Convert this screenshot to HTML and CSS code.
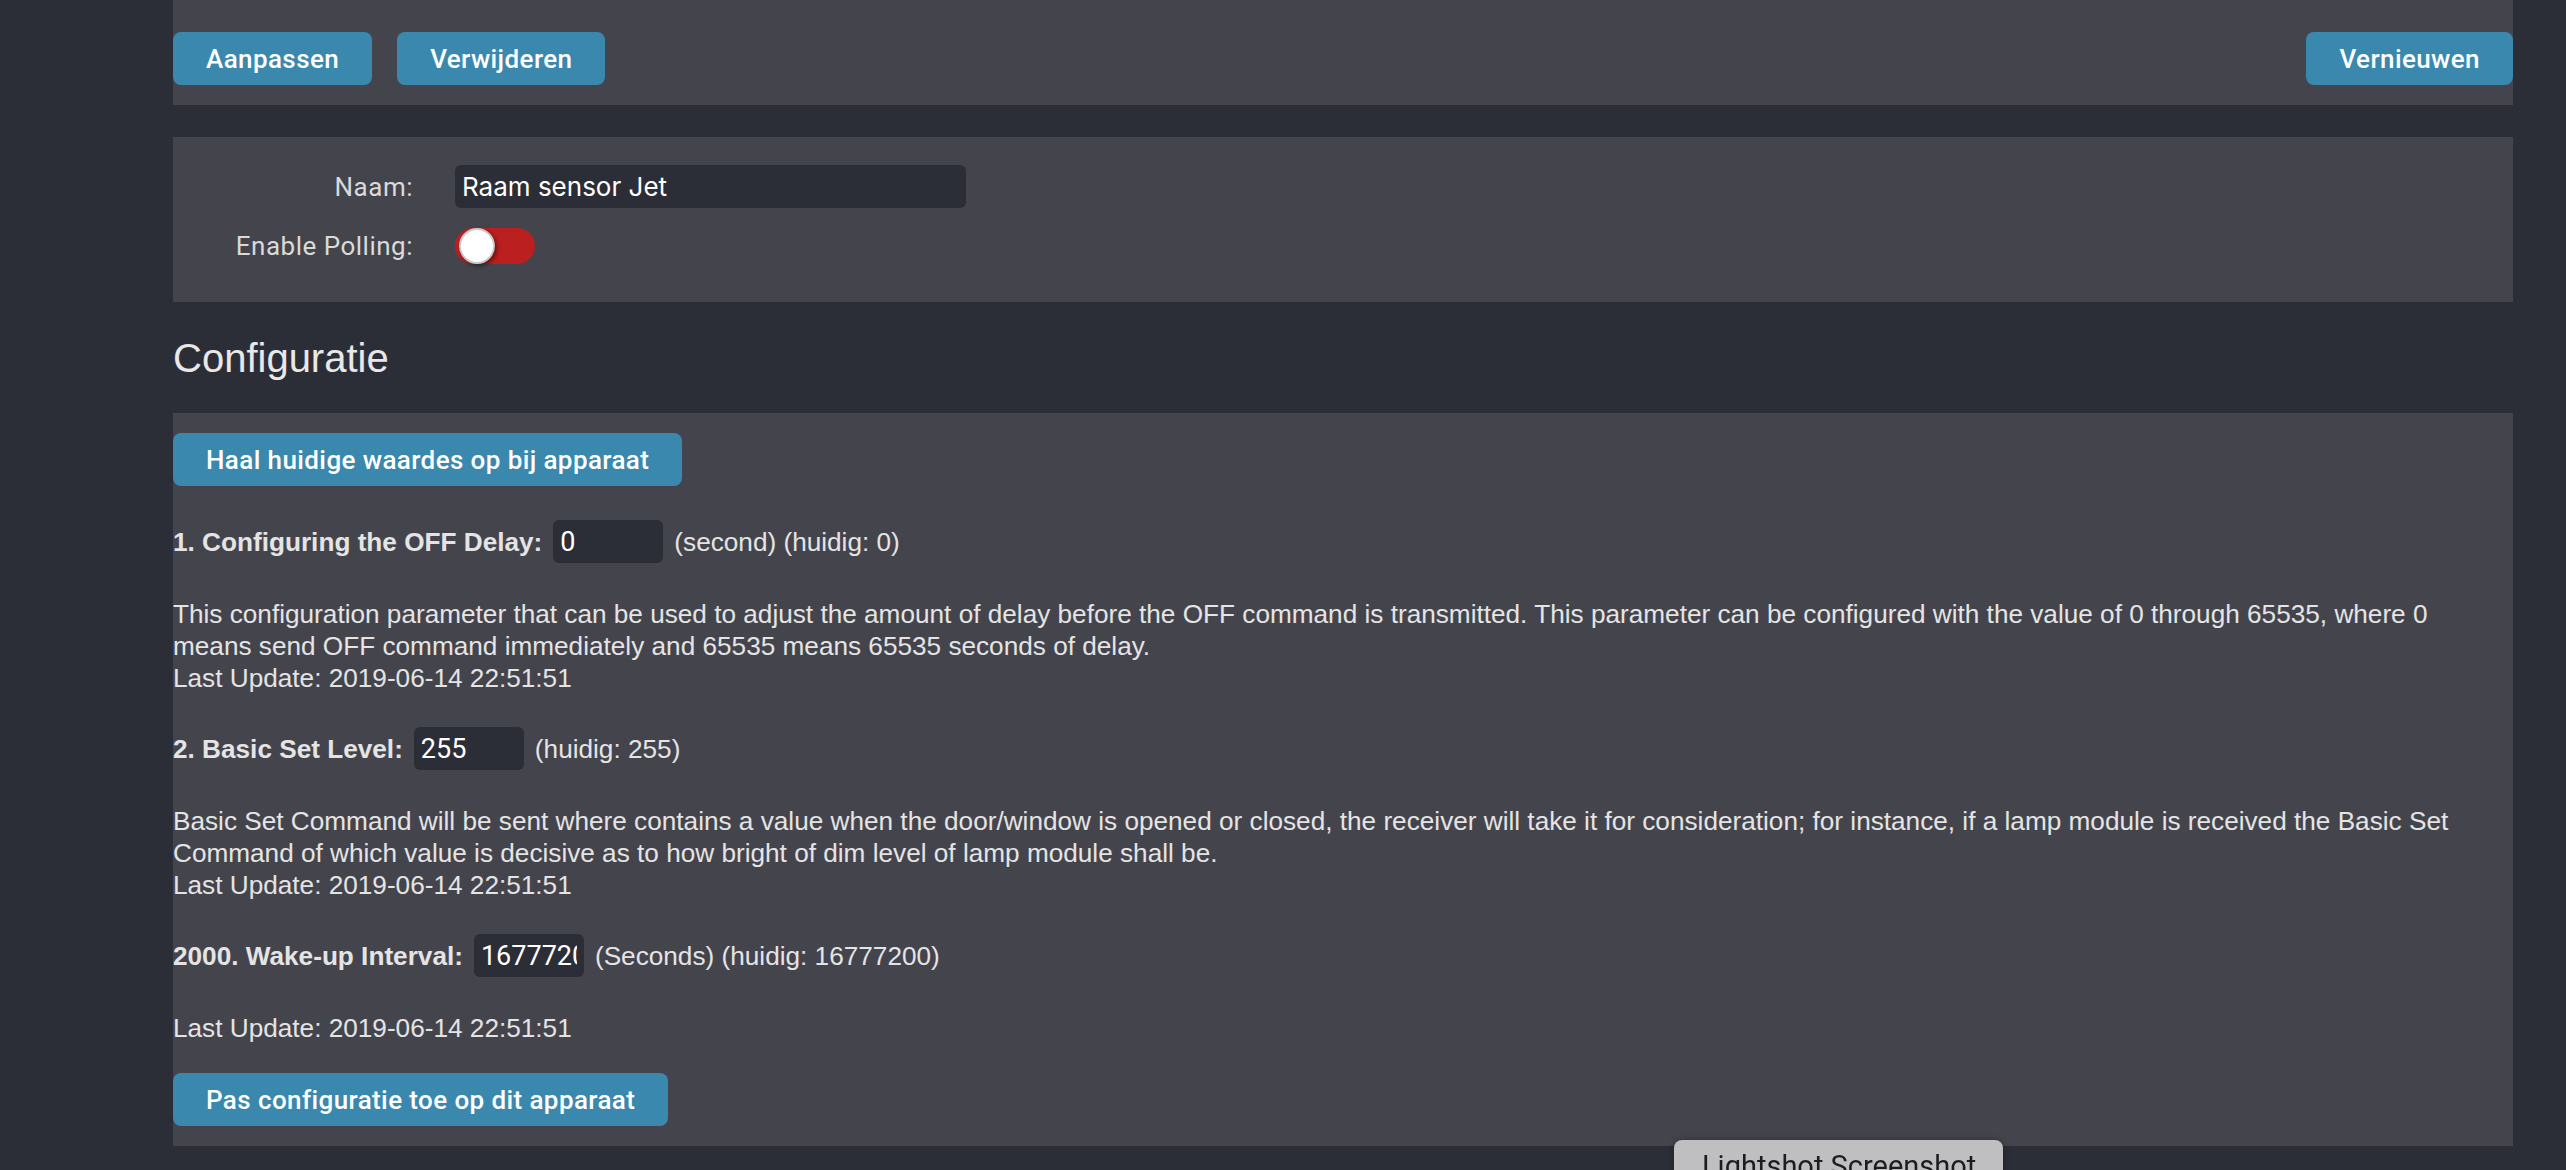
FILE: index.html
```html
<!DOCTYPE html>
<html lang="nl">
<head>
<meta charset="utf-8">
<title>Apparaat</title>
<link rel="stylesheet" href="styles.css">
</head>
<body>
<div class="page">
  <section class="panel toolbar">
    <div class="btn-group">
      <button class="btn">Aanpassen</button>
      <button class="btn">Verwijderen</button>
    </div>
    <button class="btn">Vernieuwen</button>
  </section>

  <section class="panel form">
    <label class="field-label">Naam:</label>
    <div class="field-control"><input class="text-input" type="text" value="Raam sensor Jet"></div>
    <label class="field-label">Enable Polling:</label>
    <div class="field-control"><span class="toggle"><span class="knob"></span></span></div>
  </section>

  <h2 class="section-title">Configuratie</h2>

  <section class="panel config">
    <button class="btn">Haal huidige waardes op bij apparaat</button>

    <div class="param-row">
      <b class="param-label">1. Configuring the OFF Delay:</b>
      <input class="param-input" type="text" value="0">
      <span>(second) (huidig: 0)</span>
    </div>
    <p class="desc">This configuration parameter that can be used to adjust the amount of delay before the OFF command is transmitted. This parameter can be configured with the value of 0 through 65535, where 0 means send OFF command immediately and 65535 means 65535 seconds of delay.<br>Last Update: 2019-06-14 22:51:51</p>

    <div class="param-row">
      <b class="param-label">2. Basic Set Level:</b>
      <input class="param-input" type="text" value="255">
      <span>(huidig: 255)</span>
    </div>
    <p class="desc">Basic Set Command will be sent where contains a value when the door/window is opened or closed, the receiver will take it for consideration; for instance, if a lamp module is received the Basic Set Command of which value is decisive as to how bright of dim level of lamp module shall be.<br>Last Update: 2019-06-14 22:51:51</p>

    <div class="param-row">
      <b class="param-label">2000. Wake-up Interval:</b>
      <input class="param-input" type="text" value="16777200">
      <span>(Seconds) (huidig: 16777200)</span>
    </div>
    <p class="desc">Last Update: 2019-06-14 22:51:51</p>

    <button class="btn btn-apply">Pas configuratie toe op dit apparaat</button>
  </section>
</div>

<div class="tooltip">Lightshot Screenshot</div>
</body>
</html>
```
FILE: styles.css
```css
html, body {
  margin: 0;
  padding: 0;
  height: 100%;
  overflow: hidden;
}

body {
  background: #2c2e37;
  color: #e4e4e4;
  font-family: "Liberation Sans", Arial, sans-serif;
  font-size: 26.18px;
}

.page {
  padding: 0 53px 0 173px;
}

.panel {
  background: #44444d;
}

.btn {
  display: inline-flex;
  align-items: center;
  justify-content: center;
  height: 53px;
  padding: 0 33px;
  border: none;
  border-radius: 8px;
  background: #3a88ae;
  color: #ffffff;
  font-family: Roboto, "Open Sans", sans-serif;
  font-weight: 500;
  font-size: 26px;
  letter-spacing: 0.4px;
  cursor: pointer;
}

/* toolbar */
.toolbar {
  display: flex;
  justify-content: space-between;
  align-items: flex-start;
  padding: 32px 0 20px;
}

.btn-group {
  display: flex;
  gap: 25px;
}

/* form */
.form {
  margin-top: 32px;
  padding: 28px 0 38px;
  display: grid;
  grid-template-columns: 240px 1fr;
  grid-template-rows: 43px 36px;
  column-gap: 42px;
  row-gap: 20px;
  align-items: center;
}

.field-label {
  text-align: right;
  font-family: Roboto, sans-serif;
  font-size: 26px;
  letter-spacing: 0.5px;
  color: #dadada;
}

.field-control {
  display: flex;
  align-items: center;
}

.text-input {
  box-sizing: border-box;
  width: 511px;
  height: 43px;
  padding: 0 7px;
  border: none;
  border-radius: 6px;
  background: #2c2e37;
  color: #ffffff;
  font-family: Inter, Roboto, sans-serif;
  font-size: 26px;
  outline: none;
}

.toggle {
  box-sizing: border-box;
  display: flex;
  align-items: center;
  width: 80px;
  height: 36px;
  padding-left: 4px;
  border-radius: 18px;
  background: #bc1f1f;
}

.knob {
  box-sizing: border-box;
  width: 36px;
  height: 36px;
  border-radius: 50%;
  background: #ffffff;
  border: 2px solid #c9c9c9;
  box-shadow: 2px 2px 4px rgba(0, 0, 0, 0.45);
}

/* config */
.section-title {
  margin: 33px 0 32px;
  font-family: "Liberation Sans", Arial, sans-serif;
  font-size: 40px;
  font-weight: normal;
  line-height: 46px;
  color: #e8e8e8;
}

.config {
  padding: 20px 0 20px;
}

.param-row {
  display: flex;
  align-items: center;
  gap: 11px;
  height: 43px;
  margin-top: 34px;
  line-height: 32px;
  white-space: nowrap;
}

.param-row + .desc {
  margin-top: 35px;
}

.desc + .param-row {
  margin-top: 33px;
}

.param-label {
  font-weight: bold;
}

.param-input {
  box-sizing: border-box;
  width: 110px;
  height: 43px;
  padding: 0 7px;
  border: none;
  border-radius: 6px;
  background: #2c2e37;
  color: #ffffff;
  font-family: Roboto, sans-serif;
  font-size: 27px;
  outline: none;
}

.desc {
  margin: 0;
  line-height: 32px;
}

.btn-apply {
  margin-top: 29px;
}

/* overlay tooltip */
.tooltip {
  position: fixed;
  left: 1674px;
  top: 1140px;
  box-sizing: border-box;
  width: 329px;
  height: 60px;
  padding: 9px 0 0 28px;
  border-radius: 8px;
  background: #bfbfc1;
  color: #1d1d1d;
  font-family: Roboto, sans-serif;
  font-size: 29px;
  line-height: normal;
  box-shadow: 0 0 6px rgba(0, 0, 0, 0.35);
}
```
